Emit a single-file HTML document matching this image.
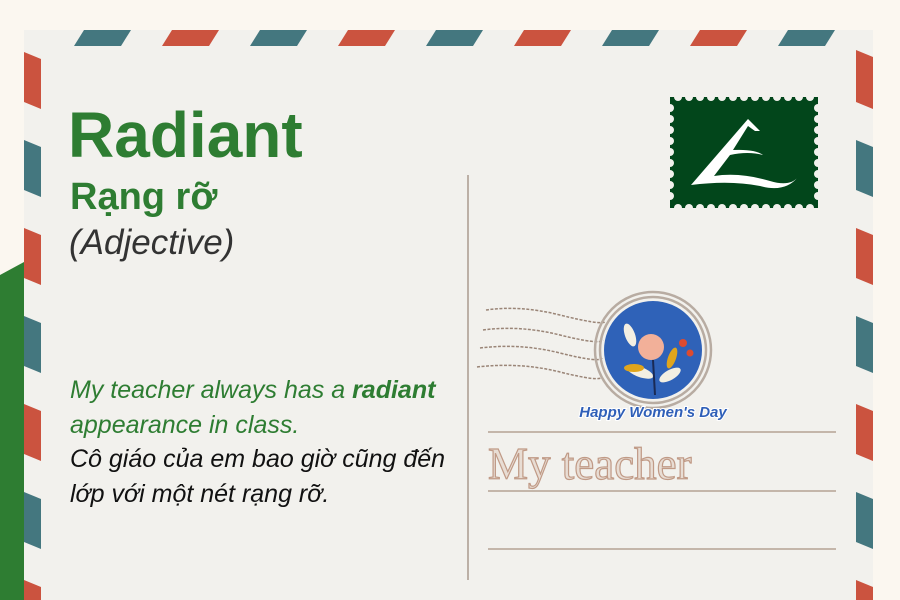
<!DOCTYPE html>
<html><head><meta charset="utf-8"><style>
html,body{margin:0;padding:0;}
body{width:900px;height:600px;overflow:hidden;background:#fbf7f0;position:relative;font-family:"Liberation Sans","Noto Sans CJK SC",sans-serif;}
.t{position:absolute;white-space:nowrap;}
</style></head><body>
<svg width="900" height="600" style="position:absolute;left:0;top:0">
  <polygon points="0,275 24,262 24,600 0,600" fill="#2e7d32"/>
  <rect x="24" y="30" width="849" height="570" fill="#f2f1ed"/>
  <g>
    <polygon points="74,46 84,30 131,30 121,46" fill="#44777f"/>
    <polygon points="162,46 172,30 219,30 209,46" fill="#cb533f"/>
    <polygon points="250,46 260,30 307,30 297,46" fill="#44777f"/>
    <polygon points="338,46 348,30 395,30 385,46" fill="#cb533f"/>
    <polygon points="426,46 436,30 483,30 473,46" fill="#44777f"/>
    <polygon points="514,46 524,30 571,30 561,46" fill="#cb533f"/>
    <polygon points="602,46 612,30 659,30 649,46" fill="#44777f"/>
    <polygon points="690,46 700,30 747,30 737,46" fill="#cb533f"/>
    <polygon points="778,46 788,30 835,30 825,46" fill="#44777f"/>
  </g>
  <g>
    <polygon points="24,52 41,59 41,109 24,102" fill="#cb533f"/>
    <polygon points="24,140 41,147 41,197 24,190" fill="#44777f"/>
    <polygon points="24,228 41,235 41,285 24,278" fill="#cb533f"/>
    <polygon points="24,316 41,323 41,373 24,366" fill="#44777f"/>
    <polygon points="24,404 41,411 41,461 24,454" fill="#cb533f"/>
    <polygon points="24,492 41,499 41,549 24,542" fill="#44777f"/>
    <polygon points="24,580 41,587 41,600 24,600" fill="#cb533f"/>
  </g>
  <g>
    <polygon points="856,50 873,57 873,109 856,102" fill="#cb533f"/>
    <polygon points="856,140 873,147 873,197 856,190" fill="#44777f"/>
    <polygon points="856,228 873,235 873,285 856,278" fill="#cb533f"/>
    <polygon points="856,316 873,323 873,373 856,366" fill="#44777f"/>
    <polygon points="856,404 873,411 873,461 856,454" fill="#cb533f"/>
    <polygon points="856,492 873,499 873,549 856,542" fill="#44777f"/>
    <polygon points="856,580 873,587 873,600 856,600" fill="#cb533f"/>
  </g>
  <rect x="670" y="97" width="148" height="111" fill="#02461b"/>
  <g fill="#f2f1ed">
    <circle cx="678" cy="97" r="4"/><circle cx="689" cy="97" r="4"/><circle cx="700" cy="97" r="4"/><circle cx="711" cy="97" r="4"/><circle cx="722" cy="97" r="4"/><circle cx="733" cy="97" r="4"/><circle cx="744" cy="97" r="4"/><circle cx="755" cy="97" r="4"/><circle cx="766" cy="97" r="4"/><circle cx="777" cy="97" r="4"/><circle cx="788" cy="97" r="4"/><circle cx="799" cy="97" r="4"/><circle cx="810" cy="97" r="4"/>
    <circle cx="678" cy="208" r="4"/><circle cx="689" cy="208" r="4"/><circle cx="700" cy="208" r="4"/><circle cx="711" cy="208" r="4"/><circle cx="722" cy="208" r="4"/><circle cx="733" cy="208" r="4"/><circle cx="744" cy="208" r="4"/><circle cx="755" cy="208" r="4"/><circle cx="766" cy="208" r="4"/><circle cx="777" cy="208" r="4"/><circle cx="788" cy="208" r="4"/><circle cx="799" cy="208" r="4"/><circle cx="810" cy="208" r="4"/>
    <circle cx="670" cy="108" r="4"/><circle cx="670" cy="119" r="4"/><circle cx="670" cy="130" r="4"/><circle cx="670" cy="141" r="4"/><circle cx="670" cy="152" r="4"/><circle cx="670" cy="163" r="4"/><circle cx="670" cy="174" r="4"/><circle cx="670" cy="185" r="4"/><circle cx="670" cy="196" r="4"/>
    <circle cx="818" cy="108" r="4"/><circle cx="818" cy="119" r="4"/><circle cx="818" cy="130" r="4"/><circle cx="818" cy="141" r="4"/><circle cx="818" cy="152" r="4"/><circle cx="818" cy="163" r="4"/><circle cx="818" cy="174" r="4"/><circle cx="818" cy="185" r="4"/><circle cx="818" cy="196" r="4"/>
  </g>
  <path d="M691,185 L748,119 L760,131 L755,131 L748,126 L733,150 Q755,149 763,155 Q748,151 730,155 L714,176 Q740,172 770,181 Q790,187 798,177 Q785,193 760,186 Q730,180 691,185 Z" fill="#fff"/>
  <rect x="467" y="175" width="2" height="405" fill="#bcb0a6"/>
  <rect x="488" y="431" width="348" height="2" fill="#c4b6aa"/>
  <rect x="488" y="490" width="348" height="2" fill="#c4b6aa"/>
  <rect x="488" y="548" width="348" height="2" fill="#c4b6aa"/>
  <g fill="none" stroke="#9a8577" stroke-width="1.5" stroke-dasharray="3 1.5">
    <path d="M486,310 Q520,305 560,315 T605,322"/>
    <path d="M483,330 Q520,325 560,335 T603,340"/>
    <path d="M480,348 Q520,343 560,353 T602,358"/>
    <path d="M477,367 Q520,362 560,372 T602,377"/>
  </g>
  <circle cx="653" cy="350" r="58" fill="none" stroke="#b8aca2" stroke-width="2.5"/>
  <circle cx="653" cy="350" r="53" fill="none" stroke="#b8aca2" stroke-width="2.5"/>
  <circle cx="653" cy="350" r="49" fill="#2f62b8"/>
  <circle cx="651" cy="347" r="13" fill="#f2b099"/>
  <ellipse cx="630" cy="335" rx="5" ry="12" fill="#f3efe2" transform="rotate(-20 630 335)"/>
  <ellipse cx="640" cy="372" rx="14" ry="5" fill="#f3efe2" transform="rotate(20 640 372)"/>
  <ellipse cx="670" cy="375" rx="12" ry="5" fill="#f3efe2" transform="rotate(-30 670 375)"/>
  <ellipse cx="634" cy="368" rx="10" ry="4" fill="#e0a51c"/>
  <ellipse cx="672" cy="358" rx="4" ry="11" fill="#e0a51c" transform="rotate(20 672 358)"/>
  <circle cx="683" cy="343" r="4" fill="#dd4b2f"/><circle cx="690" cy="353" r="3.5" fill="#dd4b2f"/>
  <path d="M653,360 L655,395" stroke="#1a2a55" stroke-width="2"/>
  <text x="653" y="417" text-anchor="middle" font-family="Liberation Sans" font-weight="bold" font-style="italic" font-size="15" fill="#2f5fb8" stroke="#fff" stroke-width="2" paint-order="stroke">Happy Women's Day</text>
</svg>
<div class="t" style="left:68px;top:98px;font-size:64px;font-weight:bold;color:#2e7d32;">Radiant</div>
<div class="t" style="left:70px;top:176px;font-size:38px;font-weight:bold;color:#2e7d32;">Rạng rỡ</div>
<div class="t" style="left:69px;top:223px;font-size:35px;font-style:italic;color:#333;">(Adjective)</div>
<div class="t" style="left:70px;top:373px;font-size:25px;font-style:italic;line-height:34.5px;color:#2e7d32;">My teacher always has a <b>radiant</b><br>appearance in class.<br><span style="color:#111">Cô giáo của em bao giờ cũng đến<br>lớp với một nét rạng rỡ.</span></div>
<div class="t" style="left:488px;top:438px;font-family:'Liberation Serif',serif;font-size:45px;color:#e8ddd4;-webkit-text-stroke:1.2px #c09a86;">My teacher</div>
</body></html>
